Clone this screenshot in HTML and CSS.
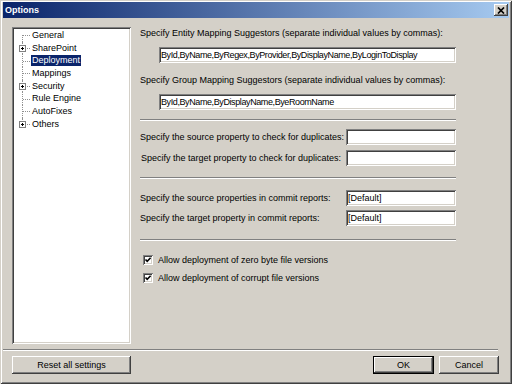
FILE: index.html
```html
<!DOCTYPE html>
<html lang="en">
<head>
  <meta charset="UTF-8">
  <meta name="viewport" content="width=device-width, initial-scale=1.0">
  <title>Options</title>
  <link rel="stylesheet" href="styles.css">
</head>
<body>
  <div class="window">
    <div class="titlebar">
      <span class="title">Options</span>
      <button class="close-button" aria-label="Close">
        <svg width="8" height="7" viewBox="0 0 8 7"><path d="M1 0.5 L7 6.5 M7 0.5 L1 6.5" stroke="#000" stroke-width="1.7" fill="none"/></svg>
      </button>
    </div>

    <div class="client">
      <div class="main">
        <ul class="tree">
          <li><span class="twig"></span><span class="node">General</span></li>
          <li><span class="twig"><span class="expander"></span></span><span class="node">SharePoint</span></li>
          <li><span class="twig"></span><span class="node selected">Deployment</span></li>
          <li><span class="twig"></span><span class="node">Mappings</span></li>
          <li><span class="twig"><span class="expander"></span></span><span class="node">Security</span></li>
          <li><span class="twig"></span><span class="node">Rule Engine</span></li>
          <li><span class="twig"></span><span class="node">AutoFixes</span></li>
          <li><span class="twig"><span class="expander"></span></span><span class="node">Others</span></li>
        </ul>

        <div class="panel">
          <div class="section suggestors">
            <div class="label">Specify Entity Mapping Suggestors (separate individual values by commas):</div>
            <div class="field field-wide">ById,ByName,ByRegex,ByProvider,ByDisplayName,ByLoginToDisplay</div>
            <div class="label">Specify Group Mapping Suggestors (separate individual values by commas):</div>
            <div class="field field-wide">ById,ByName,ByDisplayName,ByeRoomName</div>
          </div>
          <div class="separator"></div>

          <div class="section duplicates">
            <div class="row">
              <span class="label">Specify the source property to check for duplicates:</span>
              <div class="field field-short"></div>
            </div>
            <div class="row">
              <span class="label indent">Specify the target property to check for duplicates:</span>
              <div class="field field-short"></div>
            </div>
          </div>
          <div class="separator"></div>

          <div class="section reports">
            <div class="row">
              <span class="label">Specify the source properties in commit reports:</span>
              <div class="field field-short">[Default]</div>
            </div>
            <div class="row">
              <span class="label">Specify the target property in commit reports:</span>
              <div class="field field-short">[Default]</div>
            </div>
          </div>
          <div class="separator"></div>

          <div class="section options">
            <label class="check">
              <span class="checkbox"><svg width="10" height="10" viewBox="0 0 10 10"><path d="M2.5 4.5 L4.2 6.3 L7.6 2.8" stroke="#000" stroke-width="1.6" fill="none"/></svg></span>
              Allow deployment of zero byte file versions
            </label>
            <label class="check">
              <span class="checkbox"><svg width="10" height="10" viewBox="0 0 10 10"><path d="M2.5 4.5 L4.2 6.3 L7.6 2.8" stroke="#000" stroke-width="1.6" fill="none"/></svg></span>
              Allow deployment of corrupt file versions
            </label>
          </div>
        </div>
      </div>

      <div class="separator footer-separator"></div>

      <div class="footer">
        <button class="button reset-button">Reset all settings</button>
        <div class="footer-buttons">
          <button class="button ok-button">OK</button>
          <button class="button cancel-button">Cancel</button>
        </div>
      </div>
    </div>
  </div>
</body>
</html>
```

FILE: styles.css
```css
* {
  box-sizing: border-box;
}
body {
  margin: 0;
  font-family: "Liberation Sans", Arial, sans-serif;
  font-size: 9px;
  color: #000;
  background-color: #d4d0c8;
}
.window {
  width: 512px;
  height: 384px;
  padding: 2px 3px 3px 3px;
  display: flex;
  flex-direction: column;
  background-color: #d4d0c8;
  box-shadow: inset 1px 1px #d4d0c8, inset -1px -1px #404040, inset 2px 2px #fff, inset -2px -2px #808080;
}
.titlebar {
  height: 16px;
  display: flex;
  align-items: center;
  justify-content: space-between;
  padding: 0 1px 0 2px;
  background: linear-gradient(to right, #0a246a, #a6caf0);
}
.title {
  color: white;
  font-weight: bold;
}
.close-button {
  width: 14px;
  height: 12px;
  padding: 0;
  border: none;
  display: flex;
  align-items: center;
  justify-content: center;
  background-color: #d4d0c8;
  box-shadow: inset -1px -1px #404040, inset 1px 1px #fff, inset -2px -2px #808080;
}
.client {
  flex: 1;
  display: flex;
  flex-direction: column;
  padding-top: 9px;
}
.main {
  display: flex;
  margin-left: 9px;
}

/* tree */
.tree {
  width: 119px;
  height: 317px;
  margin: 0;
  padding: 2px 0 0 2px;
  list-style: none;
  background: white;
  box-shadow: inset 1px 1px #808080, inset -1px -1px #fff, inset 2px 2px #404040, inset -2px -2px #d4d0c8;
}
.tree li {
  height: 12.7px;
  display: flex;
  align-items: center;
}
.twig {
  position: relative;
  width: 17px;
  height: 100%;
  flex: none;
}
.twig::before {
  content: "";
  position: absolute;
  left: 8px;
  top: 0;
  bottom: 0;
  border-left: 1px dotted #909090;
}
.tree li:first-child .twig::before {
  top: 50%;
}
.tree li:last-child .twig::before {
  bottom: 50%;
}
.twig::after {
  content: "";
  position: absolute;
  left: 9px;
  top: 50%;
  width: 7px;
  border-top: 1px dotted #909090;
}
.expander {
  position: absolute;
  z-index: 1;
  left: 5px;
  top: calc(50% - 3px);
  width: 7px;
  height: 7px;
  border: 1px solid #808080;
  background: white;
}
.expander::before, .expander::after {
  content: "";
  position: absolute;
  background: #000;
}
.expander::before {
  left: 1px;
  top: 2px;
  width: 3px;
  height: 1px;
}
.expander::after {
  left: 2px;
  top: 1px;
  width: 1px;
  height: 3px;
}
.node {
  padding: 0 1px;
  line-height: 11px;
  white-space: nowrap;
}
.node.selected {
  background-color: #0a246a;
  color: white;
}

/* right panel */
.panel {
  width: 316px;
  margin-left: 9px;
  display: flex;
  flex-direction: column;
}
.section {
  display: flex;
  flex-direction: column;
}
.label {
  line-height: 11px;
  white-space: nowrap;
}
.label.indent {
  margin-left: 1px;
}
.field {
  height: 16px;
  padding: 0 2px;
  line-height: 16px;
  white-space: nowrap;
  overflow: hidden;
  background: white;
  box-shadow: inset 1px 1px #808080, inset -1px -1px #fff, inset 2px 2px #404040, inset -2px -2px #d4d0c8;
}
.field-wide {
  width: 297px;
  margin-left: 19px;
  letter-spacing: -0.4px;
}
.field-short {
  width: 110px;
}
.suggestors {
  padding: 1px 0 9px;
}
.suggestors .field {
  margin-top: 8px;
}
.suggestors .field + .label {
  margin-top: 12px;
}
.row {
  height: 16px;
  display: flex;
  align-items: center;
  justify-content: space-between;
}
.duplicates {
  padding: 8px 0 11px;
  gap: 5px;
}
.reports {
  padding: 11px 0 13px;
  gap: 4px;
}
.options {
  padding-top: 12px;
  gap: 5px;
}
.separator {
  height: 2px;
  border-top: 1px solid #808080;
  border-bottom: 1px solid #fff;
}
.check {
  height: 13px;
  display: flex;
  align-items: center;
  gap: 5px;
  padding-left: 3px;
}
.checkbox {
  width: 10px;
  height: 10px;
  display: flex;
  background: white;
  box-shadow: inset 1px 1px #808080, inset -1px -1px #fff, inset 2px 2px #404040, inset -2px -2px #d4d0c8;
}

/* footer */
.footer-separator {
  margin: 5px 11px 0 0;
}
.footer {
  display: flex;
  justify-content: space-between;
  padding: 5px 10px 0 9px;
}
.footer-buttons {
  display: flex;
  gap: 5px;
}
.button {
  height: 18px;
  padding: 0;
  border: none;
  font-family: inherit;
  font-size: inherit;
  color: #000;
  background-color: #d4d0c8;
  box-shadow: inset -1px -1px #404040, inset 1px 1px #fff, inset -2px -2px #808080, inset 2px 2px #d4d0c8;
}
.reset-button {
  width: 119px;
}
.ok-button {
  width: 61px;
  border: 1px solid #000;
}
.cancel-button {
  width: 60px;
}
```
